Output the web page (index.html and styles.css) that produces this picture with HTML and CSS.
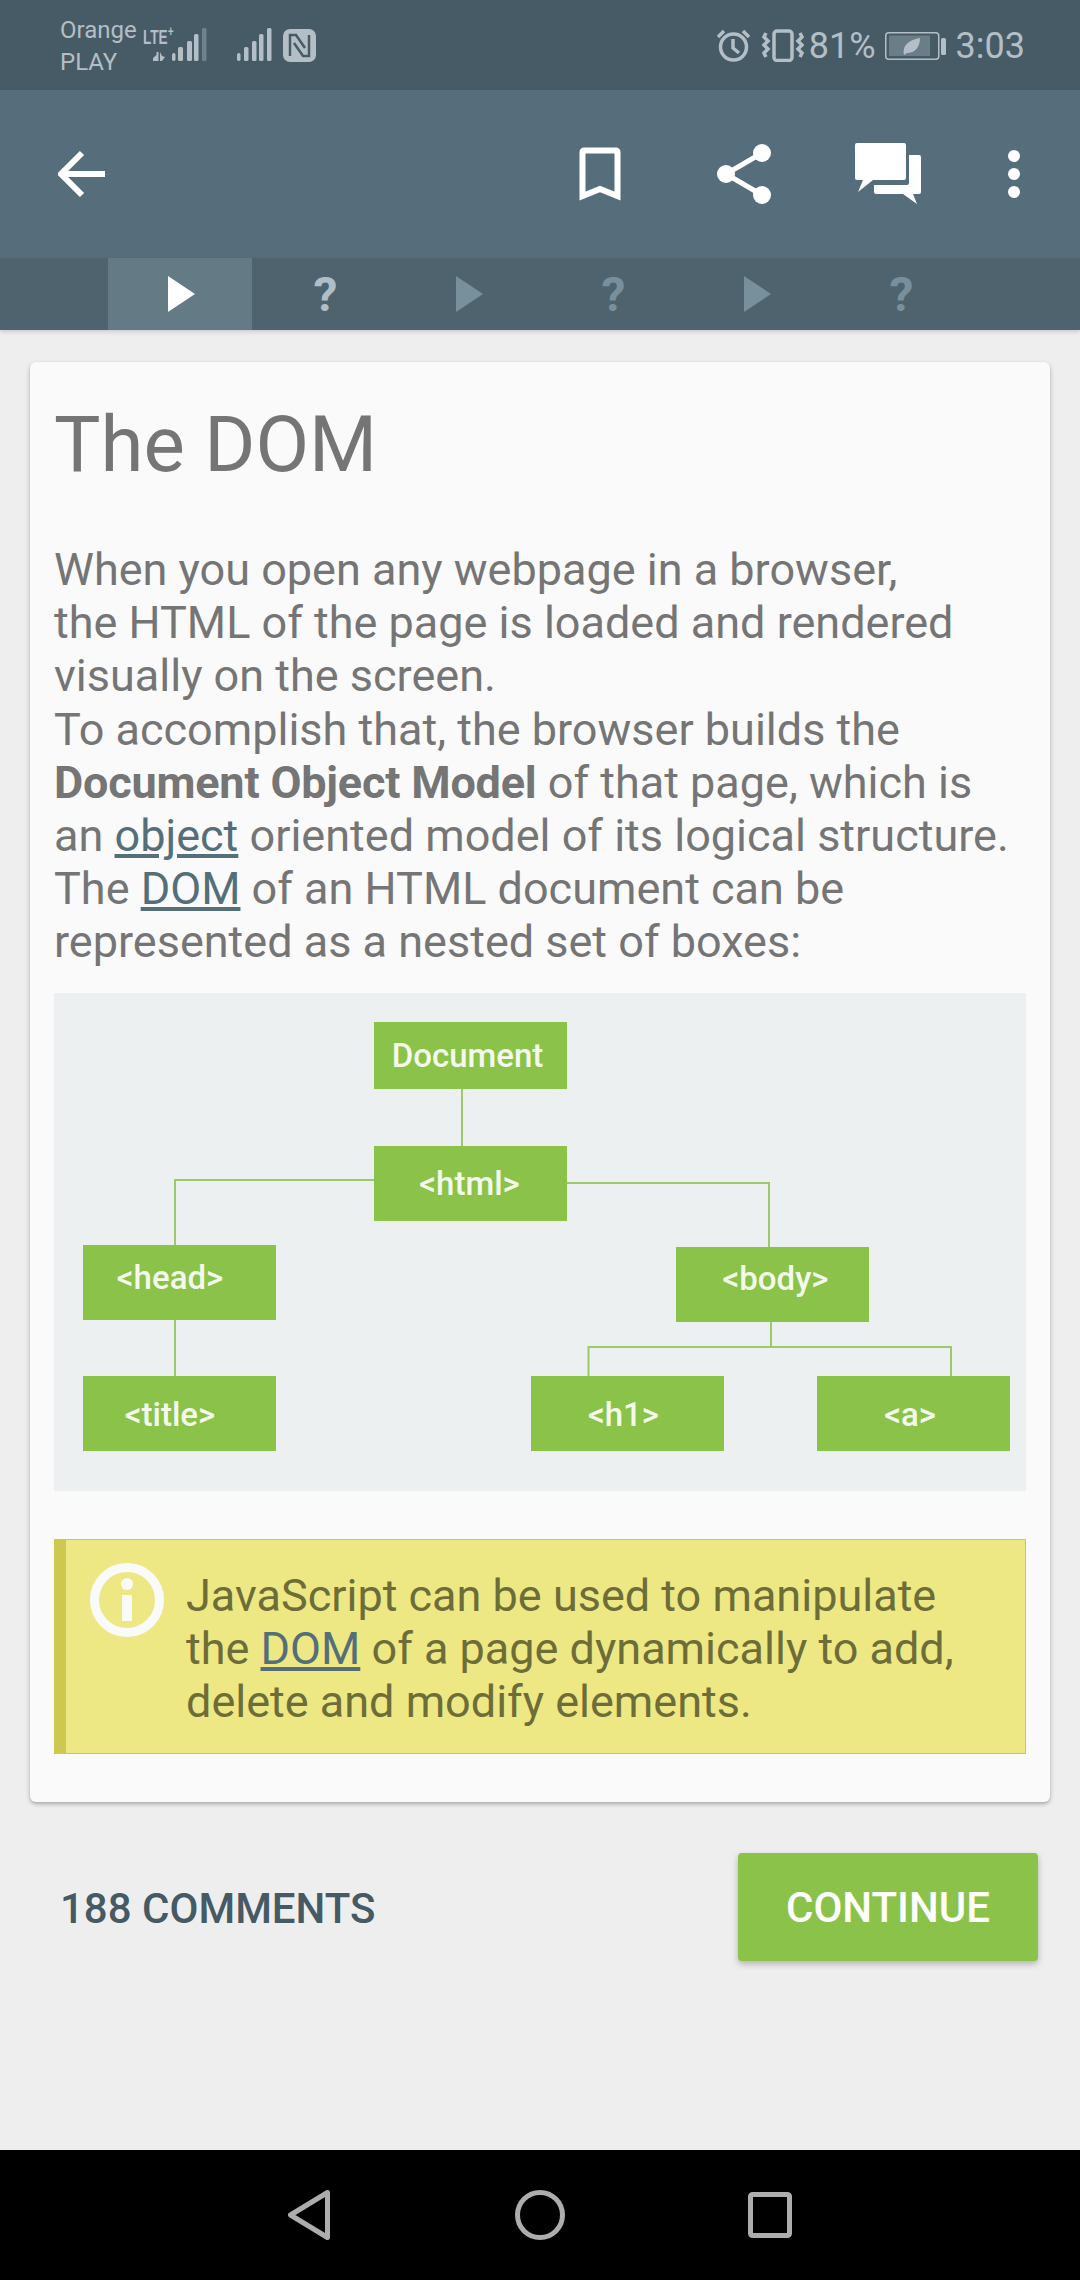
FILE: index.html
```html
<!DOCTYPE html>
<html lang="en">
<head>
    <meta charset="UTF-8">
    <meta name="viewport" content="width=device-width, initial-scale=1.0">
    <title>The DOM</title>
    <link rel="stylesheet" href="styles.css">
</head>
<body>
    <!-- Phone status bar -->
    <div class="status-bar">
        <div class="carrier">
            <span>Orange</span>
            <span>PLAY</span>
        </div>
        <div class="sim-one">
            <span class="lte">LTE<sup>+</sup></span>
            <svg class="signal-one" viewBox="0 0 54 33" width="54" height="33">
                <path class="st-fill" d="M0 33v-3l3.500-3v-3l2 0v9zM7 33v-9l2 4 3 1-3 4z"/>
                <rect class="st-fill" x="19" y="25" width="3.500" height="8" rx="1.700"/>
                <rect class="st-fill" x="25" y="19" width="5" height="14" rx="1.500"/>
                <rect class="st-fill" x="34" y="13" width="5" height="20" rx="1.500"/>
                <rect class="st-fill" x="41" y="6" width="4.500" height="27" rx="1.500"/>
                <rect class="st-dim" x="49" y="0" width="4.500" height="33" rx="1.500"/>
            </svg>
        </div>
        <svg class="signal-two" viewBox="0 0 36 33" width="36" height="33">
            <rect class="st-fill" x="1" y="25" width="3.500" height="8" rx="1.700"/>
            <rect class="st-fill" x="8" y="19" width="4.500" height="14" rx="1.500"/>
            <rect class="st-fill" x="16" y="13" width="4.500" height="20" rx="1.500"/>
            <rect class="st-fill" x="23" y="6" width="4.500" height="27" rx="1.500"/>
            <rect class="st-fill" x="31" y="0" width="4.500" height="33" rx="1.500"/>
        </svg>
        <svg class="nfc" viewBox="0 0 33 33" width="33" height="33">
            <rect class="st-fill" width="33" height="33" rx="7"/>
            <path class="st-cut" d="M7 27V6h6l9 13M26 6v21h-6l-9-13"/>
        </svg>
        <div class="status-right">
            <svg class="alarm" viewBox="0 0 33 33" width="33" height="33">
                <circle class="st-line" cx="16.500" cy="18" r="13"/>
                <path class="st-line" d="M16 10v9l6 5M1 8l6-6M32 8l-6-6"/>
            </svg>
            <svg class="vibrate" viewBox="0 0 42 33" width="42" height="33">
                <rect class="st-line" x="12" y="2" width="18" height="29.500" rx="3"/>
                <path class="st-line" d="M4 4l-2 4 4 4-4 4 4 4-4 4 2 4M38 4l2 4-4 4 4 4-4 4 4 4-2 4"/>
            </svg>
            <span class="percent">81%</span>
            <svg class="battery" viewBox="0 0 61 28" width="61" height="28">
                <rect class="batt-shell" x="0.750" y="0.750" width="53" height="26.500" rx="3"/>
                <rect class="batt-level" x="4" y="3.500" width="41" height="20.500" rx="1"/>
                <rect class="st-fill" x="56" y="6" width="5" height="17" rx="1.500"/>
                <path class="st-fill" d="M19 23c-2-9 4-15 16-17 0 9-5 15-13 15z"/>
            </svg>
            <span class="clock">3:03</span>
        </div>
    </div>

    <!-- Toolbar -->
    <div class="toolbar">
        <svg class="back-icon" viewBox="0 0 48 48" width="48" height="48">
            <path class="tool-line" d="M47 24H5M24 3L3 24l21 21"/>
        </svg>
        <div class="toolbar-actions">
            <button class="tool-btn">
                <svg viewBox="0 0 42 54" width="42" height="54">
                    <path class="tool-line" d="M3.500 49V5a1.500 1.500 0 0 1 1.500-1.500h32a1.500 1.500 0 0 1 1.500 1.500v44L21 42z"/>
                </svg>
            </button>
            <button class="tool-btn">
                <svg viewBox="0 0 54 60" width="54" height="60">
                    <path class="tool-thin" d="M45 9L9 30l36 21"/>
                    <circle class="tool-fill" cx="45" cy="9" r="9"/>
                    <circle class="tool-fill" cx="9" cy="30" r="9"/>
                    <circle class="tool-fill" cx="45" cy="51" r="9"/>
                </svg>
            </button>
            <button class="tool-btn">
                <svg viewBox="0 0 66 62" width="66" height="62">
                    <path class="tool-fill" d="M2 0h47a2 2 0 0 1 2 2v33a2 2 0 0 1-2 2H18L3 49l5-12H2a2 2 0 0 1-2-2V2a2 2 0 0 1 2-2z"/>
                    <path class="tool-fill" d="M54 12h10a2 2 0 0 1 2 2v35a2 2 0 0 1-2 2h-6l4 10-14-10H21a2 2 0 0 1-2-2v-7h33a2 2 0 0 0 2-2z"/>
                </svg>
            </button>
            <button class="tool-btn more-btn">
                <span class="dot"></span>
                <span class="dot"></span>
                <span class="dot"></span>
            </button>
        </div>
    </div>

    <!-- Lesson steps -->
    <div class="steps">
        <div class="step active"><span class="play-tri"></span></div>
        <div class="step first-q">?</div>
        <div class="step"><span class="play-tri dim"></span></div>
        <div class="step">?</div>
        <div class="step"><span class="play-tri dim"></span></div>
        <div class="step">?</div>
    </div>

    <div class="content">
        <div class="card">
            <h1>The DOM</h1>
            <p class="lesson-text">When you open any webpage in a browser,<br>
                the HTML of the page is loaded and rendered visually on the screen.<br>
                To accomplish that, the browser builds the <strong>Document Object Model</strong> of that page, which is an <a href="#">object</a> oriented model of its logical structure.<br>
                The <a href="#">DOM</a> of an HTML document can be represented as a nested set of boxes:</p>

            <!-- DOM tree diagram -->
            <div class="diagram">
                <svg class="tree-lines" viewBox="0 0 972 498" width="972" height="498">
                    <path d="M408 96v57M321 187H121v65M121 326v57M513 190h202v64M717 328v26M534.500 383v-29h362.500v29"/>
                </svg>
                <div class="node n-document">Document</div>
                <div class="node n-html">&lt;html&gt;</div>
                <div class="node n-head">&lt;head&gt;</div>
                <div class="node n-body">&lt;body&gt;</div>
                <div class="node n-title">&lt;title&gt;</div>
                <div class="node n-h1">&lt;h1&gt;</div>
                <div class="node n-a">&lt;a&gt;</div>
            </div>

            <div class="note">
                <svg class="note-icon" viewBox="0 0 74 74" width="74" height="74">
                    <circle cx="37" cy="37" r="32.500"/>
                    <circle class="note-dot" cx="37" cy="21" r="6"/>
                    <rect class="note-dot" x="32" y="32" width="10" height="26"/>
                </svg>
                <p>JavaScript can be used to manipulate the <a href="#">DOM</a> of a page dynamically to add, delete and modify elements.</p>
            </div>
        </div>

        <div class="lesson-footer">
            <span class="comments">188 COMMENTS</span>
            <button class="continue">CONTINUE</button>
        </div>
    </div>

    <!-- Android nav bar -->
    <div class="nav-bar">
        <svg viewBox="0 0 44 50" width="44" height="50">
            <path class="nav-line" d="M39.500 2.500L2.500 25l37 22.500z"/>
        </svg>
        <svg viewBox="0 0 50 50" width="50" height="50">
            <circle class="nav-line" cx="25" cy="25" r="22.500"/>
        </svg>
        <svg viewBox="0 0 44 46" width="44" height="46">
            <rect class="nav-line" x="2.500" y="2.500" width="39" height="41" rx="2"/>
        </svg>
    </div>
</body>
</html>
```

FILE: styles.css
```css
* {
    box-sizing: border-box;
}

body {
    margin: 0;
    width: 1080px;
    height: 2280px;
    display: flex;
    flex-direction: column;
    overflow: hidden;
    background: #eeeeee;
    font-family: Roboto, sans-serif;
    color: #757575;
}

/* Status bar */
.status-bar {
    height: 90px;
    flex: none;
    display: flex;
    align-items: flex-start;
    background: #475b67;
    color: #b3bfc5;
    padding-left: 60px;
}

.carrier {
    width: 83px;
    display: flex;
    flex-direction: column;
    font-size: 24px;
    line-height: 32px;
    padding-top: 14px;
}

.sim-one {
    width: 93px;
    height: 61px;
    margin-top: 28px;
    position: relative;
}

.lte {
    position: absolute;
    left: 0;
    top: -1px;
    font-family: "Liberation Sans", sans-serif;
    font-size: 20px;
    font-weight: 700;
    line-height: 20px;
    transform: scaleX(0.68);
    transform-origin: left top;
}

.lte sup {
    font-size: 15px;
    line-height: 0;
}

.signal-one {
    position: absolute;
    left: 10px;
    top: 0;
}

.signal-two {
    margin-top: 28px;
}

.nfc {
    margin: 29px 0 0 11px;
}

.st-fill { fill: #b3bfc5; }
.st-dim { fill: #6f818b; }
.st-cut { fill: none; stroke: #475b67; stroke-width: 2.500; }
.st-line { fill: none; stroke: #b3bfc5; stroke-width: 3.500; }

.status-right {
    margin-left: auto;
    padding: 29px 55px 0 0;
    display: flex;
    align-items: flex-start;
    font-size: 36px;
    line-height: 34px;
}

.vibrate { margin-left: 12px; }
.percent { margin-left: 5px; }
.battery { margin: 3px 0 0 9px; }
.clock { margin-left: 10px; }

.batt-shell { fill: none; stroke: #b3bfc5; stroke-width: 1.500; }
.batt-level { fill: #6b7e88; }

/* Toolbar */
.toolbar {
    height: 168px;
    flex: none;
    display: flex;
    align-items: center;
    background: #566e7b;
    padding: 0 12px 0 58px;
}

.toolbar-actions {
    margin-left: auto;
    display: flex;
    align-items: center;
}

.tool-btn {
    width: 144px;
    height: 120px;
    border: 0;
    padding: 0;
    background: none;
    display: flex;
    align-items: center;
    justify-content: center;
}

.more-btn {
    width: 108px;
    flex-direction: column;
    gap: 6px;
}

.dot {
    width: 12px;
    height: 12px;
    border-radius: 50%;
    background: #fff;
}

.tool-line { fill: none; stroke: #fff; stroke-width: 6; }
.tool-thin { fill: none; stroke: #fff; stroke-width: 5; }
.tool-fill { fill: #fff; }

/* Steps strip */
.steps {
    height: 72px;
    flex: none;
    display: flex;
    justify-content: center;
    background: #4f636f;
    box-shadow: 0 2px 4px rgba(0, 0, 0, 0.15);
}

.step {
    width: 144px;
    display: flex;
    align-items: center;
    justify-content: center;
    padding-left: 3px;
    font-size: 48px;
    font-weight: 700;
    color: #78909c;
}

.step.active {
    background: #647a84;
}

.step.first-q {
    color: #b0bec5;
}

.play-tri {
    width: 0;
    height: 0;
    border-style: solid;
    border-width: 18px 0 18px 27px;
    border-color: transparent transparent transparent #fff;
}

.play-tri.dim {
    border-left-color: #78909c;
}

/* Lesson */
.content {
    flex: 1;
}

.card {
    margin: 32px 30px 0;
    height: 1440px;
    padding: 0 24px;
    background: #fafafa;
    border-radius: 6px;
    box-shadow: 0 2px 4px rgba(0, 0, 0, 0.3);
}

.card h1 {
    margin: 0;
    padding-top: 39px;
    font-size: 78px;
    line-height: 88px;
    font-weight: 400;
}

.lesson-text {
    margin: 54px 0 0;
    font-size: 45px;
    line-height: 53.200px;
}

.lesson-text strong {
    font-weight: 700;
    letter-spacing: -0.200px;
}

.lesson-text a,
.note a {
    color: #546e7a;
}

/* Diagram: boxes placed on a free canvas */
.diagram {
    position: relative;
    height: 498px;
    margin-top: 24px;
    background: #ecf0f1;
}

.tree-lines {
    position: absolute;
    left: 0;
    top: 0;
}

.tree-lines path {
    fill: none;
    stroke: #9bc96b;
    stroke-width: 2;
}

.node {
    position: absolute;
    width: 193px;
    height: 75px;
    display: flex;
    align-items: center;
    justify-content: center;
    background: #8bc34a;
    color: #f4f9ec;
    font-size: 33px;
    font-weight: 500;
}

.n-document { left: 320px; top: 29px; height: 67px; padding-right: 6px; }
.n-html { left: 320px; top: 153px; padding-right: 2px; }
.n-head { left: 29px; top: 252px; padding: 0 19px 10px 0; }
.n-body { left: 622px; top: 254px; padding: 0 0 12px 6px; }
.n-title { left: 29px; top: 383px; padding: 2px 19px 0 0; }
.n-h1 { left: 477px; top: 383px; padding: 2px 8px 0 0; }
.n-a { left: 763px; top: 383px; padding: 2px 7px 0 0; }

/* Info note */
.note {
    height: 215px;
    margin-top: 48px;
    display: flex;
    background: #ede883;
    border: 1px solid #cdc94f;
    border-left-width: 12px;
    padding: 23px 40px 0 24px;
    color: #6d6d3a;
    font-size: 45px;
    line-height: 53.200px;
}

.note-icon {
    flex: none;
}

.note-icon circle {
    fill: none;
    stroke: #fafafa;
    stroke-width: 9;
}

.note-icon .note-dot {
    fill: #fafafa;
    stroke: none;
}

.note p {
    margin: 6px 0 0 22px;
}

/* Footer row */
.lesson-footer {
    display: flex;
    align-items: center;
    justify-content: space-between;
    padding: 51px 42px 0 60px;
}

.comments {
    padding-top: 2px;
    color: #455a64;
    font-size: 42px;
    font-weight: 500;
}

.continue {
    width: 300px;
    height: 108px;
    border: 0;
    border-radius: 4px;
    background: #8bc34a;
    color: #fff;
    font-family: Roboto, sans-serif;
    font-size: 42px;
    font-weight: 500;
    box-shadow: 0 3px 6px rgba(0, 0, 0, 0.25);
}

/* Android nav bar */
.nav-bar {
    height: 130px;
    flex: none;
    display: flex;
    align-items: center;
    justify-content: center;
    gap: 183px;
    background: #000;
}

.nav-line {
    fill: none;
    stroke: #adadad;
    stroke-width: 5;
    stroke-linejoin: round;
}
```
